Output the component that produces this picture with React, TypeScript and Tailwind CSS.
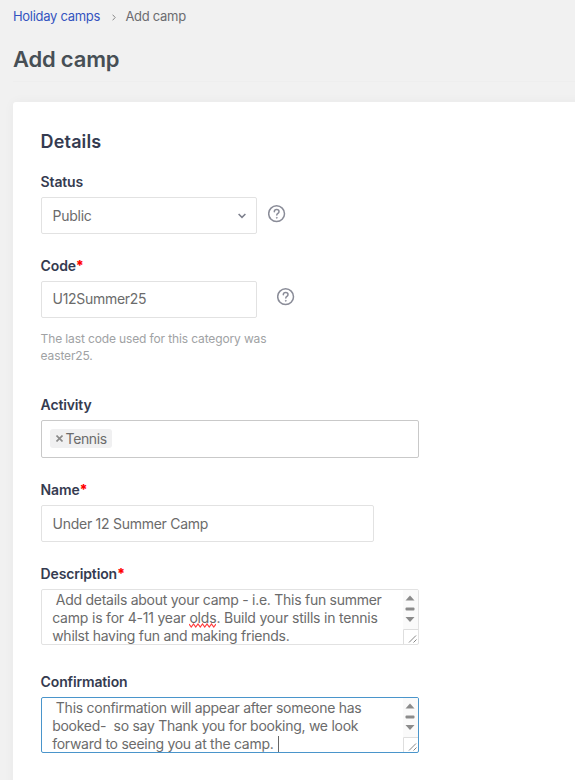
import type { ReactNode } from "react";

function Label({ children, required }: { children: ReactNode; required?: boolean }) {
  return (
    <div className="h-5 text-[14px] leading-5 font-semibold tracking-[-0.15px] text-[#353b50] whitespace-nowrap">
      {children}
      {required && <span className="font-extrabold text-[#ff0000]">*</span>}
    </div>
  );
}

function HelpIcon({ className }: { className?: string }) {
  return (
    <svg className={className} width="18" height="18" viewBox="0 0 18 18" fill="none" stroke="#8a8c98" strokeWidth="1.5">
      <circle cx="8.6" cy="8.7" r="7.9" />
      <path d="M6.3 6.8c0-1.4 1-2.2 2.4-2.2s2.3.9 2.3 2.1c0 1.7-2.2 1.6-2.2 3.4" strokeLinecap="round" />
      <circle cx="8.8" cy="12.8" r="0.5" fill="#8a8c98" strokeWidth="0.8" />
    </svg>
  );
}

function Misspelled({ children }: { children: ReactNode }) {
  return (
    <span className="relative">
      {children}
      <svg className="absolute top-[14px] left-0" width="27" height="5" viewBox="0 0 27 5" fill="none" stroke="#ff3b3b" strokeWidth="1.2">
        <path d="M0 1l2.25 3 2.25-3 2.25 3 2.25-3 2.25 3 2.25-3 2.25 3 2.25-3 2.25 3 2.25-3 2.25 3 2.25-3" />
      </svg>
    </span>
  );
}

function TextArea({ lines, focused, caret }: { lines: ReactNode[]; focused?: boolean; caret?: boolean }) {
  return (
    <div
      className={`mt-[5px] flex h-14 w-[378px] overflow-hidden rounded-[2px] border bg-white ${
        focused ? "border-[#4a95cb]" : "border-[#e2e2e2]"
      }`}
    >
      <div className="flex-1 pt-px pl-[10.6px] text-[14px] leading-[18px] tracking-[-0.27px] text-[#6b6b6b]">
        {lines.map((line, i) => (
          <div key={i} className="flex whitespace-pre">
            {line}
            {caret && i === lines.length - 1 && <span className="mt-px ml-px h-4 w-px bg-[#666]" />}
          </div>
        ))}
      </div>
      {/* Scrollbar and resize grip */}
      <svg width="15" height="54" viewBox="0 0 15 54" fill="none">
        <path d="M0 0h15v39H0z" fill="#fafafa" />
        <path d="M2.5 10.5L7 5.5l4.5 5z" fill="#8b8b8b" />
        <rect x="2.5" y="17.5" width="9" height="3" rx="1" fill="#8b8b8b" />
        <path d="M2.5 27l4.5 5 4.5-5z" fill="#8b8b8b" />
        <path d="M0.5 54V39.5H15" stroke="#dedede" />
        <path d="M6 52.5l7-7M10.5 52.5l3-3" stroke="#858585" />
      </svg>
    </div>
  );
}

export default function App() {
  return (
    <div className="h-[780px] w-[575px] overflow-hidden bg-[#f1f1f1] pl-[13px] font-['Inter',sans-serif]">
      <nav className="flex h-8 items-center text-[13px] leading-4 tracking-[-0.3px] whitespace-nowrap">
        <span className="text-[#3454c0]">Holiday camps</span>
        <svg className="mt-[2px] mr-[9px] ml-[12.5px]" width="4" height="7" viewBox="0 0 4 7" fill="none" stroke="#888">
          <path d="M0.6 0.7l2.6 2.8-2.6 2.8" />
        </svg>
        <span className="text-[#6c6c70]">Add camp</span>
      </nav>

      <h1 className="mt-3 h-[38px] border-b border-[#eeeeee] text-[22px] leading-[30px] font-semibold tracking-[-0.2px] text-[#474f55]">
        Add camp
      </h1>

      <main className="mt-5 h-[700px] w-[600px] rounded-[3px] bg-white pt-[28px] pl-[27.6px] shadow-[0_0_12px_rgba(0,0,0,0.04)]">
        <h2 className="h-6 text-[18px] leading-6 font-semibold tracking-[0.15px] text-[#353b50]">Details</h2>

        <div className="mt-[18px]">
          <Label>Status</Label>
          <div className="mt-[5px] flex">
            <div className="flex h-[37px] w-[216px] items-center justify-between rounded-[2px] border border-[#e2e2e2] pr-[10px] pl-[11px] text-[14px] tracking-[-0.27px] text-[#6b6b6b]">
              Public
              <svg width="8" height="6" viewBox="0 0 8 6" fill="none" stroke="#7c7f8c" strokeWidth="1.5">
                <path d="M0.6 1l3.4 3.4L7.4 1" />
              </svg>
            </div>
            <HelpIcon className="mt-2 ml-[11px]" />
          </div>
        </div>

        <div className="mt-[22px]">
          <Label required>Code</Label>
          <div className="mt-[5px] flex">
            <div className="flex h-[37px] w-[216px] items-center rounded-[2px] border border-[#e2e2e2] pb-[2px] pl-[11px] text-[14px] tracking-[-0.3px] text-[#6b6b6b]">
              U12Summer25
            </div>
            <HelpIcon className="mt-[7px] ml-5" />
          </div>
          <p className="mt-3 text-[12px] leading-[17px] tracking-[-0.13px] text-[#a0a2a4]">
            The last code used for this category was
            <br />
            easter25.
          </p>
        </div>

        <div className="mt-[31px]">
          <Label>Activity</Label>
          <div className="mt-[5px] flex h-[38px] w-[378px] items-start rounded-[2px] border border-[#c9c9c9] pt-2 pl-2">
            <span className="flex h-[19px] w-[62px] items-center rounded-[3px] bg-[#f0f0f1] pl-[6px] text-[14px] leading-[18px] tracking-[-0.4px] text-[#6b6b6b]">
              <svg className="mr-[3px]" width="7" height="7" viewBox="0 0 7 7" stroke="#8a8a8a" strokeWidth="1.6">
                <path d="M0.5 0.5l6 6M6.5 0.5l-6 6" />
              </svg>
              Tennis
            </span>
          </div>
        </div>

        <div className="mt-[22px]">
          <Label required>Name</Label>
          <div className="mt-[5px] flex h-[37px] w-[333px] items-center rounded-[2px] border border-[#e2e2e2] pl-[11px] text-[14px] tracking-[-0.27px] text-[#6b6b6b]">
            Under 12 Summer Camp
          </div>
        </div>

        <div className="mt-[22px]">
          <Label required>Description</Label>
          <TextArea
            lines={[
              " Add details about your camp - i.e. This fun summer",
              <span key="olds" className="tracking-[-0.2px]">
                camp is for 4-11 year <Misspelled>olds</Misspelled>. Build your stills in tennis
              </span>,
              "whilst having fun and making friends.",
            ]}
          />
        </div>

        <div className="mt-[27px]">
          <Label>Confirmation</Label>
          <TextArea
            focused
            caret
            lines={[
              " This confirmation will appear after someone has",
              "booked-  so say Thank you for booking, we look",
              "forward to seeing you at the camp. ",
            ]}
          />
        </div>
      </main>
    </div>
  );
}
